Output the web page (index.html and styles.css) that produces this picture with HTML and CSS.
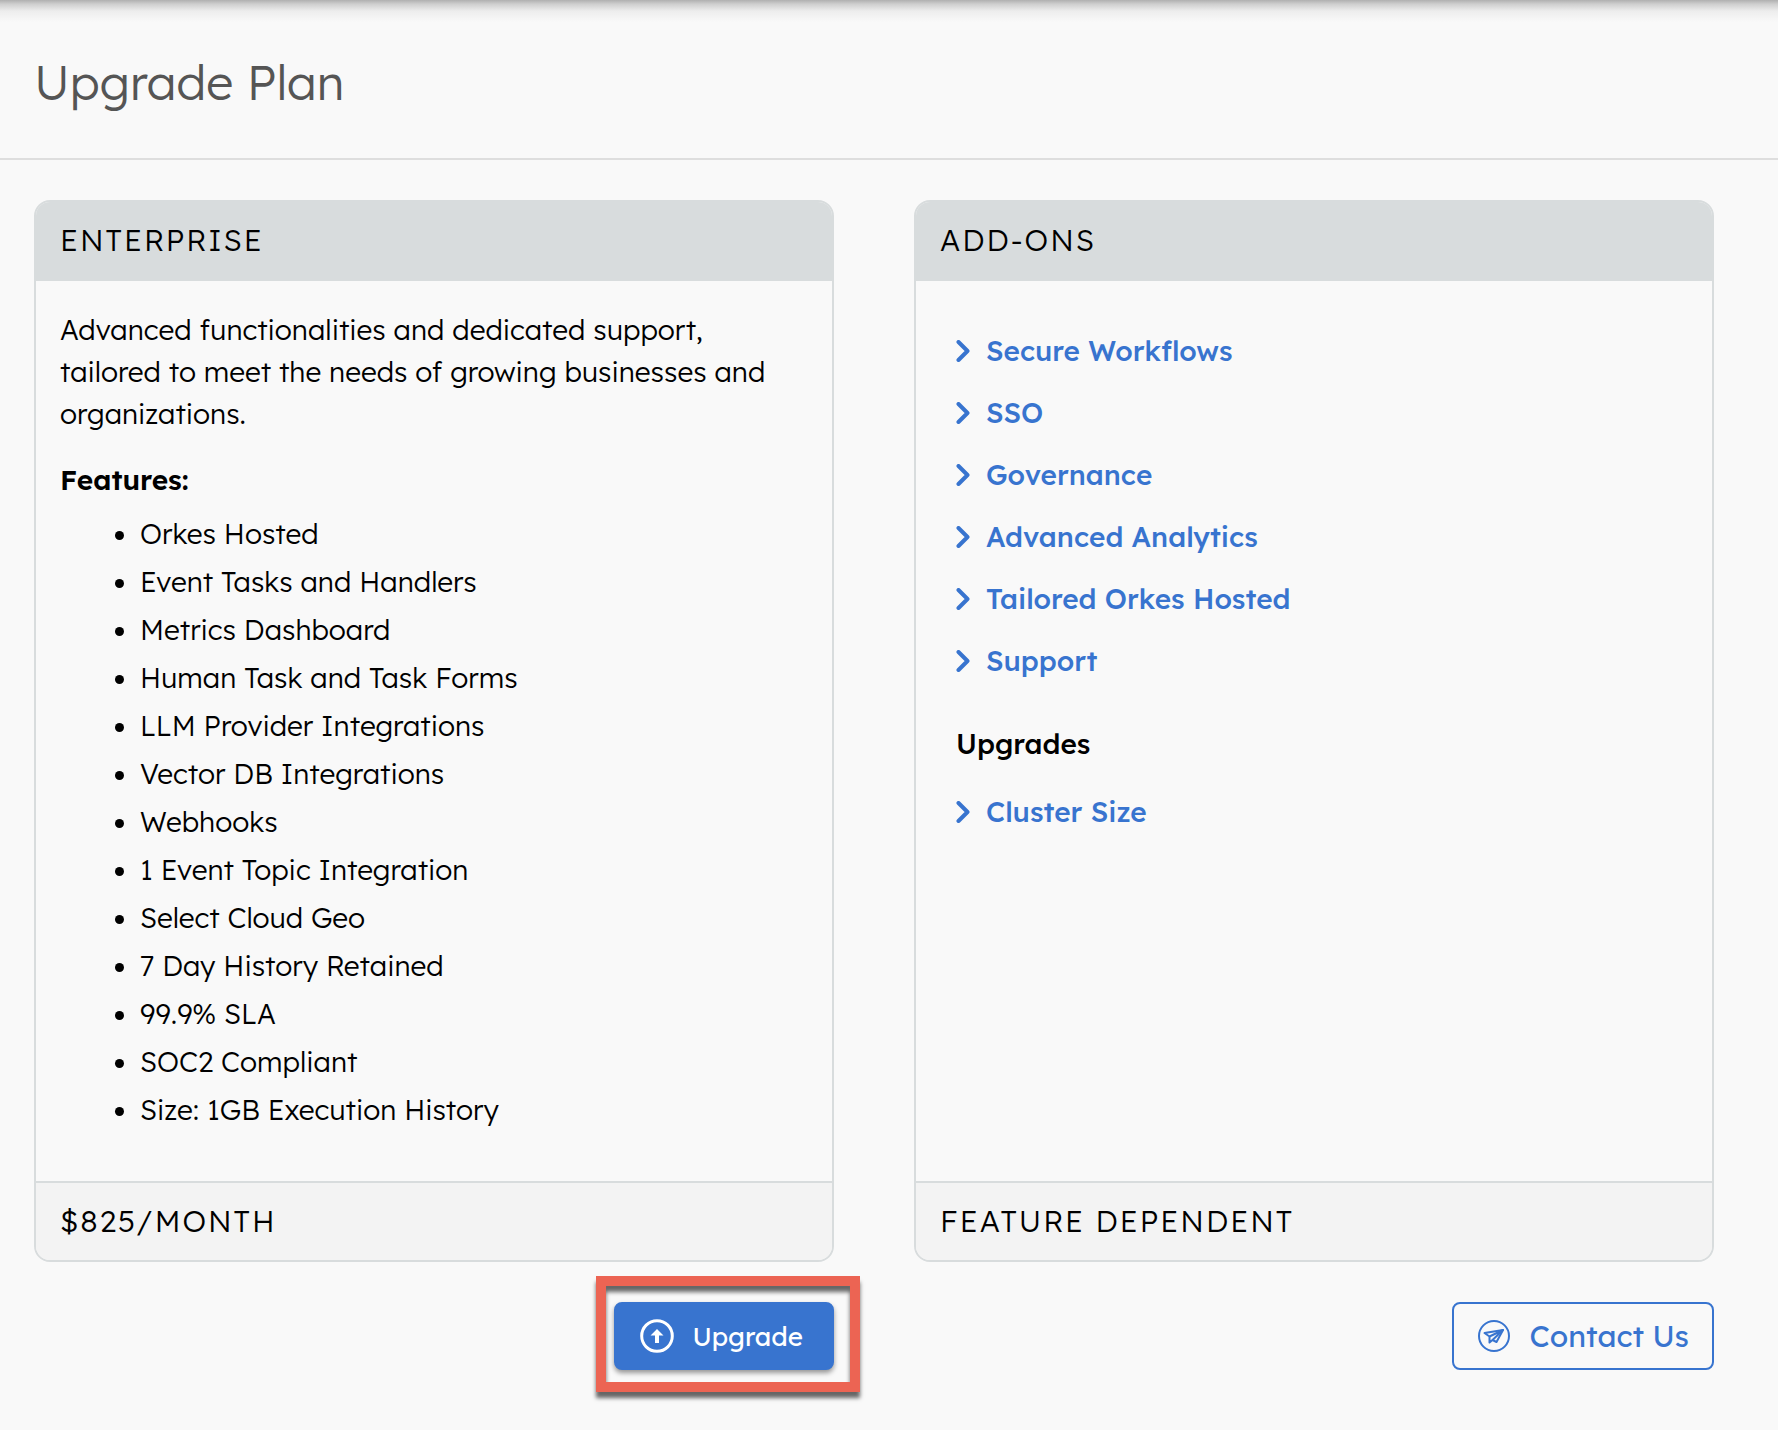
FILE: index.html
```html
<!DOCTYPE html>
<html lang="en">
<head>
  <meta charset="utf-8">
  <meta name="viewport" content="width=device-width, initial-scale=1">
  <title>Upgrade Plan</title>
  <link rel="stylesheet" href="styles.css">
</head>
<body>
  <svg class="sprite" aria-hidden="true">
    <symbol id="chevron" viewBox="0 0 14 22">
      <path d="M2.500 2l9 9-9 9" fill="none" stroke="currentColor" stroke-width="4" stroke-linecap="round" stroke-linejoin="round"/>
    </symbol>
  </svg>
  <header class="page-header">
    <h1 class="page-title">Upgrade Plan</h1>
  </header>
  <main class="plans">
    <section class="plan">
      <div class="card">
        <h2 class="card-bar">Enterprise</h2>
        <div class="card-body">
          <p class="description">Advanced functionalities and dedicated support, tailored to meet the needs of growing businesses and organizations.</p>
          <h3 class="features-title">Features:</h3>
          <ul class="features">
            <li>Orkes Hosted</li>
            <li>Event Tasks and Handlers</li>
            <li>Metrics Dashboard</li>
            <li>Human Task and Task Forms</li>
            <li>LLM Provider Integrations</li>
            <li>Vector DB Integrations</li>
            <li>Webhooks</li>
            <li>1 Event Topic Integration</li>
            <li>Select Cloud Geo</li>
            <li>7 Day History Retained</li>
            <li>99.9% SLA</li>
            <li>SOC2 Compliant</li>
            <li>Size: 1GB Execution History</li>
          </ul>
        </div>
        <p class="card-bar card-price">$825/month</p>
      </div>
      <div class="actions">
        <div class="highlight">
          <button class="button button-primary" type="button">
            <svg class="icon" viewBox="0 0 36 36" aria-hidden="true">
              <circle cx="18" cy="18" r="15.3" fill="none" stroke="currentColor" stroke-width="3"/>
              <path d="M18 11l6.500 6.500h-4.500v7.500h-4v-7.500h-4.500z" fill="currentColor"/>
            </svg>
            Upgrade
          </button>
        </div>
      </div>
    </section>
    <section class="plan">
      <div class="card">
        <h2 class="card-bar">Add-ons</h2>
        <div class="card-body addons">
          <ul class="links">
            <li><a class="link" href="#secure-workflows"><svg class="chevron" aria-hidden="true"><use href="#chevron"/></svg>Secure Workflows</a></li>
            <li><a class="link" href="#sso"><svg class="chevron" aria-hidden="true"><use href="#chevron"/></svg>SSO</a></li>
            <li><a class="link" href="#governance"><svg class="chevron" aria-hidden="true"><use href="#chevron"/></svg>Governance</a></li>
            <li><a class="link" href="#advanced-analytics"><svg class="chevron" aria-hidden="true"><use href="#chevron"/></svg>Advanced Analytics</a></li>
            <li><a class="link" href="#tailored-hosting"><svg class="chevron" aria-hidden="true"><use href="#chevron"/></svg>Tailored Orkes Hosted</a></li>
            <li><a class="link" href="#support"><svg class="chevron" aria-hidden="true"><use href="#chevron"/></svg>Support</a></li>
          </ul>
          <h3 class="upgrades-title">Upgrades</h3>
          <ul class="links">
            <li><a class="link" href="#cluster-size"><svg class="chevron" aria-hidden="true"><use href="#chevron"/></svg>Cluster Size</a></li>
          </ul>
        </div>
        <p class="card-bar card-price">Feature dependent</p>
      </div>
      <div class="actions">
        <button class="button button-outline" type="button">
          <svg class="icon" viewBox="0 0 36 36" aria-hidden="true">
            <g fill="none" stroke="currentColor" stroke-width="2" stroke-linejoin="round">
              <circle cx="18" cy="18" r="15"/>
              <path d="M8.500 15L27 12l-6.500 12-4-2-3 2.500v-6z"/>
              <path d="M13.500 18.500L27 12l-10.500 10"/>
            </g>
          </svg>
          Contact Us
        </button>
      </div>
    </section>
  </main>
</body>
</html>
```
FILE: styles.css
```css
:root {
  --blue: #3874cf;
  --line: #d8dcdd;
  --red: #ec6453;
}

* {
  box-sizing: border-box;
}

body {
  margin: 0;
  background: #f9f9f9;
  color: #000;
  font-family: Lexend, Inter, "Noto Sans", sans-serif;
  font-size: 28px;
  font-weight: 300;
  line-height: 42px;
}

h1, h2, h3, p, ul {
  margin: 0;
  padding: 0;
  font-size: inherit;
}

.sprite {
  position: absolute;
  width: 0;
  height: 0;
}

.page-header {
  padding: 52px 34px 46px;
  border-bottom: 2px solid #dedede;
  background: linear-gradient(#b0b0b0, #cecece 4px, #ededed 11px, #f9f9f9 22px);
}

.page-title {
  color: #555;
  font-size: 48px;
  font-weight: 300;
  line-height: 60px;
}

.plans {
  display: grid;
  grid-template-columns: 1fr 1fr;
  gap: 80px;
  padding: 40px 64px 60px 34px;
}

.plan {
  display: flex;
  flex-direction: column;
}

.card {
  display: flex;
  flex: 1;
  flex-direction: column;
  overflow: hidden;
  border: 2px solid var(--line);
  border-radius: 16px;
}

.card-bar {
  padding: 17px 24px 20px;
  background: var(--line);
  font-size: 30px;
  font-weight: 300;
  letter-spacing: 2px;
  text-transform: uppercase;
}

.card-price {
  padding: 17px 24px 18px;
  border-top: 2px solid var(--line);
  background: #f3f3f3;
}

.card-body {
  flex: 1;
  padding: 28px 24px 47px;
}

.features-title {
  margin: 24px 0 9px;
  font-weight: 600;
}

.features {
  padding-left: 80px;
  line-height: 48px;
}

.addons {
  padding: 39px 40px 47px;
}

.links {
  list-style: none;
}

.link {
  display: flex;
  align-items: center;
  gap: 16px;
  padding: 10px 0;
  color: var(--blue);
  font-weight: 500;
  text-decoration: none;
}

.chevron {
  width: 14px;
  height: 22px;
}

.upgrades-title {
  margin: 31px 0 16px;
  font-weight: 500;
}

.actions {
  display: flex;
  justify-content: flex-end;
  margin-top: 40px;
}

.highlight {
  position: relative;
}

.highlight::after {
  position: absolute;
  inset: -26px -26px -22px -18px;
  border: 10px solid var(--red);
  box-shadow: 0 6px 4px #666, inset 0 6px 4px #666;
  content: "";
  pointer-events: none;
}

.button {
  display: flex;
  align-items: center;
  gap: 17px;
  height: 68px;
  border: 2px solid var(--blue);
  border-radius: 8px;
  font-family: inherit;
  font-weight: 400;
  cursor: pointer;
}

.button-primary {
  padding: 0 29px 0 23px;
  background: var(--blue);
  box-shadow: 0 3px 5px #0006;
  color: #fff;
  font-size: 26px;
}

.button-outline {
  padding: 0 23px 0 22px;
  background: transparent;
  color: var(--blue);
  font-size: 30px;
}

.icon {
  width: 36px;
  height: 36px;
}
```
